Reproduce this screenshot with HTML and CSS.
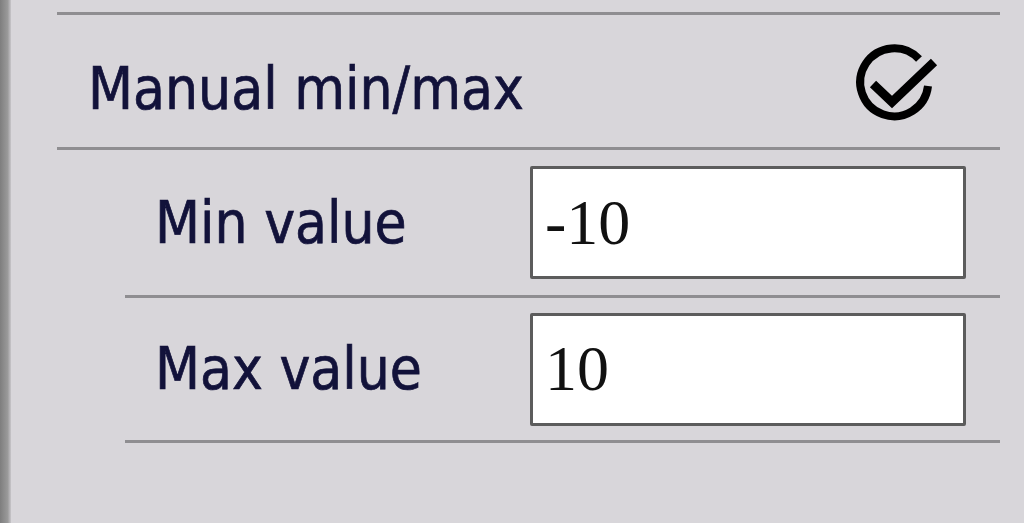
FILE: index.html
```html
<!DOCTYPE html>
<html lang="en">
<head>
    <meta charset="UTF-8">
    <meta name="viewport" content="width=device-width, initial-scale=1.0">
    <link rel="stylesheet" href="styles.css">
    <title>Manual min/max</title>
</head>
<body>
    <div class="edge"></div>
    <div class="panel">
        <div class="rule"></div>
        <div class="header">
            <span class="label">Manual min/max</span>
            <svg class="check" width="90" height="90" viewBox="0 0 90 90">
                <path d="M67 21 A34 34 0 1 0 76 48" fill="none" stroke="#000" stroke-width="8"/>
                <path d="M21 46 L40 64 L82 24" fill="none" stroke="#000" stroke-width="9" stroke-linejoin="miter"/>
            </svg>
        </div>
        <div class="rule"></div>
        <div class="group">
            <div class="row">
                <span class="row-label">Min value</span>
                <input class="field" type="text" value="-10">
            </div>
            <div class="rule"></div>
            <div class="row last">
                <span class="row-label">Max value</span>
                <input class="field" type="text" value="10">
            </div>
            <div class="rule"></div>
        </div>
    </div>
</body>
</html>
```

FILE: styles.css
```css
body {
    margin: 0;
    height: 523px;
    display: flex;
    background-color: #d8d6da;
    font-family: "DejaVu Sans Condensed", "DejaVu Sans", sans-serif;
    color: #12123a;
    overflow: hidden;
}

.edge {
    width: 11px;
    background: linear-gradient(to right, #7e7e7e, #9a9a9a 70%, #c8c6ca);
}

.panel {
    flex: 1;
    padding: 12px 24px 0 46px;
}

.rule {
    height: 3px;
    background-color: #8f8e91;
}

.header {
    height: 132px;
    display: flex;
    align-items: center;
    justify-content: space-between;
    padding: 0 58px 0 31px;
}

.label {
    font-size: 58px;
    margin-top: 16px;
    -webkit-text-stroke: 0.7px #12123a;
}

.check {
    margin-top: 4px;
}

.group {
    margin-left: 68px;
}

.row {
    height: 145px;
    display: flex;
    align-items: center;
}

.row.last {
    height: 142px;
}

.row-label {
    width: 375px;
    padding-left: 30px;
    font-size: 58px;
    -webkit-text-stroke: 0.7px #12123a;
}

.field {
    width: 436px;
    height: 113px;
    box-sizing: border-box;
    border: 3px solid #5c5c5c;
    border-radius: 2px;
    padding: 0 12px;
    font-family: "Liberation Serif", serif;
    font-size: 64px;
    color: #111;
    background-color: #fff;
}
```
